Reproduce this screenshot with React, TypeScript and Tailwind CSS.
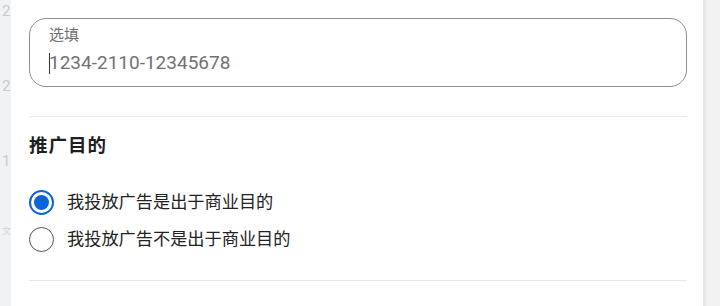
import React from "react";

export default function App() {
  const font = { fontFamily: 'Roboto, "Noto Sans CJK SC", sans-serif' };
  return (
    <div className="flex h-[306px] w-[720px] overflow-hidden bg-white" style={font}>
      {/* left background strip */}
      <div className="relative w-[11px] shrink-0 overflow-hidden bg-[#f1f2f4]">
        <div className="flex flex-col pl-[2px] text-[15px] leading-[20px] text-[#c9cbcf]">
          <span className="mt-[1px]">2</span>
          <span className="mt-[55px]">2</span>
          <span className="mt-[55px]">1</span>
          <span className="mt-[54px] pl-0 text-[9px] leading-[12px] text-[#d2d4d8]">文</span>
        </div>
      </div>

      {/* main panel */}
      <div className="flex flex-1 flex-col bg-white pl-[18px] pr-[16px] pt-[18px]">
        <div className="flex flex-col rounded-[17px] border border-[#8e8e8e] pb-[11px] pl-[19px] pt-[6px]">
          <span className="text-[15px] leading-[20px] text-[#6f6f6f]">选填</span>
          <div className="mt-[6px] flex items-center text-[19px] leading-[24px] text-[#727272]">
            <span className="-mr-[1px] inline-block h-[21px] w-[1px] bg-[#333]" />
            <span>1234-2110-12345678</span>
          </div>
        </div>

        <div className="mt-[29px] h-px bg-[#ebebeb]" />

        <div className="mt-[17px] text-[18.5px] font-bold leading-[24px] tracking-[1px] text-[#1f1f1f]">
          推广目的
        </div>

        <div className="mt-[30px] flex h-[28px] items-center">
          <span className="flex h-[25px] w-[25px] items-center justify-center rounded-full border-[2.5px] border-[#0b63d9]">
            <span className="h-[15px] w-[15px] rounded-full bg-[#0b63d9]" />
          </span>
          <span className="ml-[13px] text-[17.2px] leading-[24px] text-[#222]">我投放广告是出于商业目的</span>
        </div>

        <div className="mt-[9px] flex h-[28px] items-center">
          <span className="h-[25px] w-[25px] rounded-full border-[1.5px] border-[#555]" />
          <span className="ml-[13px] text-[17.2px] leading-[24px] text-[#222]">我投放广告不是出于商业目的</span>
        </div>

        <div className="mt-[27px] h-px bg-[#e6e6e6]" />
      </div>

      {/* right background strip */}
      <div className="w-[17px] shrink-0 border-l-[3px] border-[#e8e8e8] bg-[#f2f2f2]" />
    </div>
  );
}
